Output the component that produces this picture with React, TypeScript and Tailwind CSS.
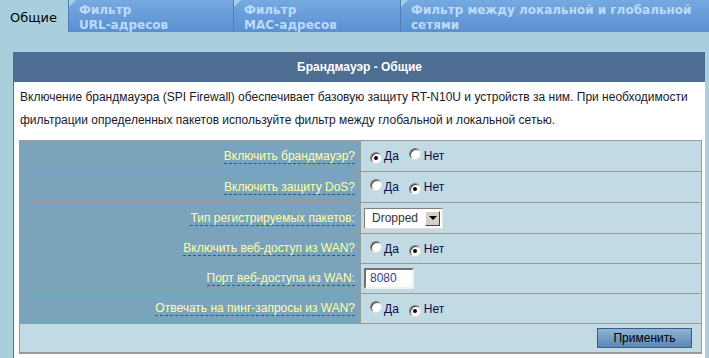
const font = "font-['Liberation_Sans',Arial,sans-serif]";

const Radio = ({ checked }: { checked?: boolean }) => (
    <span className="inline-flex items-center justify-center w-[12px] h-[12px] rounded-full bg-white border border-t-[#808080] border-l-[#808080] border-r-[#e0e0e0] border-b-[#e0e0e0] shadow-[inset_1px_1px_0_#404040]">
        {checked && <span className="w-[4px] h-[4px] rounded-full bg-black" />}
    </span>
);

const YesNo = ({ yes }: { yes: boolean }) => (
    <div className="flex items-center text-[12px] text-[#0c0c4c]">
        <span className="ml-[6px]"><Radio checked={yes} /></span>
        <span className="ml-[2px]">Да</span>
        <span className="ml-[10px]"><Radio checked={!yes} /></span>
        <span className="ml-[3px]">Нет</span>
    </div>
);

const Row = ({ label, h, children }: { label: string; h: string; children: React.ReactNode }) => (
    <div className={`flex border-b border-[#999999] ${h}`}>
        <div className="w-[341px] shrink-0 bg-[#7aa3bc] flex items-center justify-end pr-[5px] border-r border-[#999999]">
            <span className="text-[12px] leading-[14px] text-[#ffffa8] border-b border-dashed border-[#1a5e9c]">{label}</span>
        </div>
        <div className="flex-1 bg-[#c1dae3] flex items-center pl-[3px]">{children}</div>
    </div>
);

const Tab = ({ l1, l2, w }: { l1: string; l2: string; w: string }) => (
    <div className={`relative h-[32px] ${w} shrink-0 bg-gradient-to-b from-[#76a9e0] to-[#5a8fd2] border-l border-[#4f7fba] pl-[10px] pt-[3px]`}>
        <div className="absolute left-0 top-0 w-0 h-0 border-t-[7px] border-t-[#a9cfdd] border-r-[7px] border-r-transparent" />
        <div className="font-['DejaVu_Sans',Verdana,sans-serif] font-bold text-[12px] leading-[15px] text-[#bcdcfa]">
            <div>{l1}</div>
            <div>{l2}</div>
        </div>
    </div>
);

const App = () => {
    return (
        <div className={`w-[709px] h-[358px] bg-[#a9cfdd] overflow-hidden ${font}`}>
            <div className="flex h-[32px]">
                <div className="w-[68px] shrink-0 h-[32px] bg-[#a9cfdd] rounded-tl-[6px] flex items-center pl-[10px] pt-[3px] font-['DejaVu_Sans',Verdana,sans-serif] text-[13px] text-black">
                    Общие
                </div>
                <Tab l1="Фильтр" l2="URL-адресов" w="w-[165px]" />
                <Tab l1="Фильтр" l2="MAC-адресов" w="w-[167px]" />
                <Tab l1="Фильтр между локальной и глобальной" l2="сетями" w="flex-1" />
            </div>
            <div className="mt-[20px] ml-[13px] w-[692px] h-[306px] bg-white border-l border-[#4e6e93]">
                <div className="h-[30px] bg-[#4e6d93] flex items-center justify-center text-white font-bold text-[12px]">
                    Брандмауэр - Общие
                </div>
                <div className="pl-[6px] pt-[4px] text-[12px] leading-[23px] text-[#1a1a2a]">
                    <p>Включение брандмауэра (SPI Firewall) обеспечивает базовую защиту RT-N10U и устройств за ним. При необходимости</p>
                    <p>фильтрации определенных пакетов используйте фильтр между глобальной и локальной сетью.</p>
                </div>
                <div className="mt-[8px] ml-[5px] w-[683px] border border-b-2 border-[#999999]">
                    <Row label="Включить брандмауэр?" h="h-[31px]"><YesNo yes={true} /></Row>
                    <Row label="Включить защиту DoS?" h="h-[31px]"><YesNo yes={false} /></Row>
                    <Row label="Тип регистрируемых пакетов:" h="h-[31px]">
                        <div className="flex items-center h-[21px] w-[79px] bg-white border border-t-[#808080] border-l-[#808080] border-r-[#e0e0e0] border-b-[#e0e0e0]">
                            <span className="flex-1 pl-[7px] text-[12px] text-[#333333]">Dropped</span>
                            <span className="w-[15px] h-[15px] mr-[2px] bg-[#d4d0c8] border border-t-white border-l-white border-r-[#404040] border-b-[#404040] flex items-center justify-center">
                                <span className="w-0 h-0 border-l-[4px] border-r-[4px] border-t-[4px] border-l-transparent border-r-transparent border-t-black" />
                            </span>
                        </div>
                    </Row>
                    <Row label="Включить веб-доступ из WAN?" h="h-[30px]"><YesNo yes={false} /></Row>
                    <Row label="Порт веб-доступа из WAN:" h="h-[30px]">
                        <div className="h-[21px] w-[50px] bg-white border-2 border-t-[#707070] border-l-[#707070] border-r-[#f0f0f0] border-b-[#f0f0f0] pl-[4px] text-[12px] leading-[17px] text-[#3a3a8a]">
                            8080
                        </div>
                    </Row>
                    <Row label="Отвечать на пинг-запросы из WAN?" h="h-[30px]"><YesNo yes={false} /></Row>
                    <div className="h-[28px] bg-[#c1dae3] flex items-center justify-end pr-[9px]">
                        <button className="w-[95px] h-[20px] bg-gradient-to-b from-[#8db4d6] to-[#5a88b5] border border-[#3a5f86] text-[12px] text-black leading-none">
                            Применить
                        </button>
                    </div>
                </div>
            </div>
        </div>
    );
};

export default App;
